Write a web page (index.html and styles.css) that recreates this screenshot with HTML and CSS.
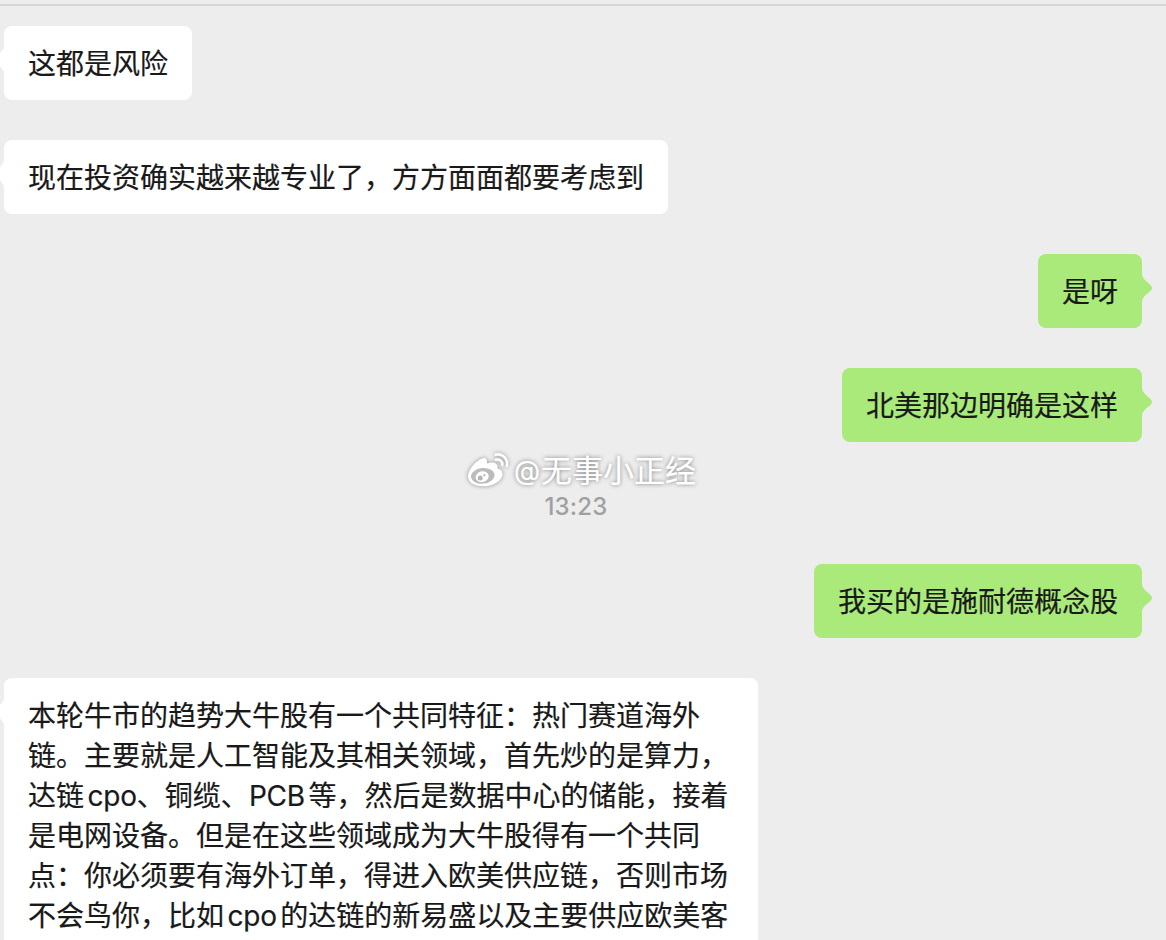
FILE: index.html
```html
<!DOCTYPE html>
<html lang="zh-CN">
<head>
    <meta charset="UTF-8">
    <meta name="viewport" content="width=device-width, initial-scale=1.0">
    <title>聊天记录</title>
    <link rel="stylesheet" href="styles.css">
</head>
<body>
    <div class="chat">
        <div class="bubble">这都是风险<svg class="tail" viewBox="0 0 10 28"><path d="M0 0Q0 3.500 3 6L8.500 11Q11.500 14 8.500 17L3 21.500Q0 24.500 0 28Z"/></svg></div>
        <div class="bubble">现在投资确实越来越专业了，方方面面都要考虑到<svg class="tail" viewBox="0 0 10 28"><path d="M0 0Q0 3.500 3 6L8.500 11Q11.500 14 8.500 17L3 21.500Q0 24.500 0 28Z"/></svg></div>
        <div class="bubble mine">是呀<svg class="tail" viewBox="0 0 10 28"><path d="M0 0Q0 3.500 3 6L8.500 11Q11.500 14 8.500 17L3 21.500Q0 24.500 0 28Z"/></svg></div>
        <div class="bubble mine">北美那边明确是这样<svg class="tail" viewBox="0 0 10 28"><path d="M0 0Q0 3.500 3 6L8.500 11Q11.500 14 8.500 17L3 21.500Q0 24.500 0 28Z"/></svg></div>
        <div class="time">13:23</div>
        <div class="bubble mine">我买的是施耐德概念股<svg class="tail" viewBox="0 0 10 28"><path d="M0 0Q0 3.500 3 6L8.500 11Q11.500 14 8.500 17L3 21.500Q0 24.500 0 28Z"/></svg></div>
        <div class="bubble long">本轮牛市的趋势大牛股有一个共同特征：热门赛道海外<br>链。主要就是人工智能及其相关领域，首先炒的是算力，<br>达链<span class="latin gap-left">cpo</span>、铜缆、<span class="latin gap-right">PCB</span>等，然后是数据中心的储能，接着<br>是电网设备。但是在这些领域成为大牛股得有一个共同<br>点：你必须要有海外订单，得进入欧美供应链，否则市场<br>不会鸟你，比如<span class="latin gap-left gap-right">cpo</span>的达链的新易盛以及主要供应欧美客<svg class="tail" viewBox="0 0 10 28"><path d="M0 0Q0 3.500 3 6L8.500 11Q11.500 14 8.500 17L3 21.500Q0 24.500 0 28Z"/></svg></div>
    </div>
    <div class="watermark">
        <svg class="logo" viewBox="0 0 44 38">
            <path fill="#fff" d="M2 24C2 18 10 8 17 6.200C20 5.500 21.500 8 21 11.500C26 9.500 32.500 10 31.500 16.500C36 17.500 37.500 21 36 25C33 31 25 34.300 17 34.300C8 34.300 2 30 2 24Z"/>
            <ellipse fill="#bbb" cx="16.800" cy="23.800" rx="11.800" ry="7.800" transform="rotate(-6 16.800 23.800)"/>
            <ellipse fill="#fff" cx="16.200" cy="24.700" rx="6.600" ry="5.400" transform="rotate(-18 16.200 24.700)"/>
            <circle fill="#b5b5b5" cx="14.200" cy="26" r="2.500"/>
            <circle fill="#b5b5b5" cx="18.300" cy="23.200" r="1.100"/>
            <path fill="none" stroke="#fff" stroke-width="2.500" stroke-linecap="round" d="M29.500 2.700C36.500 1 42.500 7 40.700 14M29.800 7.700C33.500 6.800 37 9.500 36.300 13"/>
        </svg>
        <span class="at">@</span><span>无事小正经</span>
    </div>
</body>
</html>
```
FILE: styles.css
```css
body {
    margin: 0;
    height: 940px;
    overflow: hidden;
    background: #ededed;
    color: #191919;
    font-family: Inter, "Noto Sans CJK SC", sans-serif;
    position: relative;
}
.chat {
    display: flex;
    flex-direction: column;
    align-items: flex-start;
    gap: 40px;
    margin-top: 4px;
    padding: 20px 24px 0 4px;
    border-top: 2px solid #d5d5d5;
}
.bubble {
    position: relative;
    padding: 18px 24px 16px;
    border-radius: 8px;
    background: #fff;
    font-size: 28px;
    line-height: 40px;
    white-space: nowrap;
    fill: #fff;
    -webkit-text-stroke: 0.2px #191919;
}
.mine {
    align-self: flex-end;
    background: #a9ea7a;
    fill: #a9ea7a;
}
.long {
    width: 706px;
}
.tail {
    position: absolute;
    top: 20px;
    right: 100%;
    width: 10px;
    height: 28px;
    transform: scaleX(-1);
}
.mine .tail {
    right: auto;
    left: 100%;
    transform: none;
}
.latin {
    line-height: 1;
    letter-spacing: -0.2px;
}
.gap-left {
    margin-left: 3.5px;
}
.gap-right {
    margin-right: 3.5px;
}
.time {
    align-self: stretch;
    height: 34px;
    padding: 8px 0 0 6px;
    color: #a0a0a0;
    font-size: 24px;
    font-weight: 500;
    line-height: 34px;
    letter-spacing: 0.2px;
    text-align: center;
}
.watermark {
    position: absolute;
    top: 450px;
    left: 466px;
    display: flex;
    align-items: center;
    height: 42px;
    color: #fff;
    font-size: 31px;
    line-height: 42px;
    white-space: nowrap;
    text-shadow: 0 0 4px rgba(0, 0, 0, 0.5);
    -webkit-text-stroke: 0.2px #fff;
}
.logo {
    width: 44px;
    height: 38px;
    margin-right: 4px;
    overflow: visible;
    filter: drop-shadow(0 0 2px rgba(0, 0, 0, 0.4));
}
.at {
    width: 27px;
    font-size: 27px;
}
```
